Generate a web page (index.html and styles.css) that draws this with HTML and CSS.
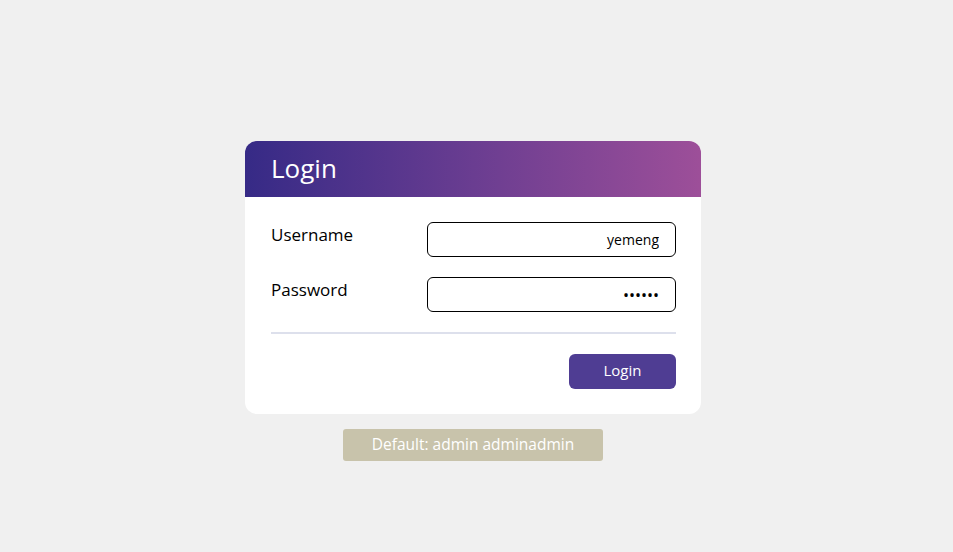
FILE: index.html
```html
<!DOCTYPE html>
<html>
<head>
<meta charset="utf-8">
<link rel="stylesheet" href="styles.css">
</head>
<body>
<div class="page">
  <div class="card">
    <div class="card-header">Login</div>
    <div class="card-body">
      <div class="row">
        <label class="label">Username</label>
        <input class="field" type="text" value="yemeng">
      </div>
      <div class="row">
        <label class="label">Password</label>
        <input class="field field-pass" type="password" value="123456">
      </div>
      <div class="divider"></div>
      <div class="actions">
        <button class="btn">Login</button>
      </div>
    </div>
  </div>
  <div class="hint">Default: admin adminadmin</div>
</div>
</body>
</html>
```
FILE: styles.css
```css
html, body {
  margin: 0;
  padding: 0;
  background: #f0f0f0;
  font-family: "Open Sans", "Noto Sans", sans-serif;
}
.page {
  width: 946px;
  display: flex;
  flex-direction: column;
  align-items: center;
  padding-top: 141px;
}
.card {
  width: 456px;
  background: #fff;
  border-radius: 12px;
  overflow: hidden;
}
.card-header {
  height: 56px;
  box-sizing: border-box;
  padding-left: 26px;
  background: linear-gradient(90deg, #362a86 0%, #6a3d91 50%, #9d4f99 100%);
  color: #fff;
  font-size: 26px;
  line-height: 54px;
}
.card-body {
  padding: 25px 25px 25px 26px;
}
.row {
  display: flex;
  justify-content: space-between;
  align-items: flex-start;
  margin-bottom: 20px;
}
.label {
  font-size: 17px;
  line-height: 26px;
  color: #000;
}
.field {
  width: 249px;
  height: 35px;
  box-sizing: border-box;
  border: 1px solid #000;
  border-radius: 6px;
  padding: 0 16px 0 15px;
  text-align: right;
  font-family: "Open Sans", "Noto Sans", sans-serif;
  font-size: 14px;
  color: #000;
  background: #fff;
  outline: none;
}
.field-pass {
  font-size: 16px;
}
.divider {
  height: 2px;
  background: #dde0ec;
}
.actions {
  display: flex;
  justify-content: flex-end;
  margin-top: 20px;
}
.btn {
  width: 107px;
  height: 35px;
  padding: 0 0 3px;
  border: none;
  border-radius: 6px;
  background: #4f3d93;
  color: #fff;
  font-family: "Open Sans", "Noto Sans", sans-serif;
  font-size: 15px;
}
.hint {
  margin-top: 15px;
  width: 260px;
  height: 32px;
  line-height: 31px;
  text-align: center;
  background: #c8c3ab;
  color: #fff;
  border-radius: 3px;
  font-size: 15.5px;
}
```
